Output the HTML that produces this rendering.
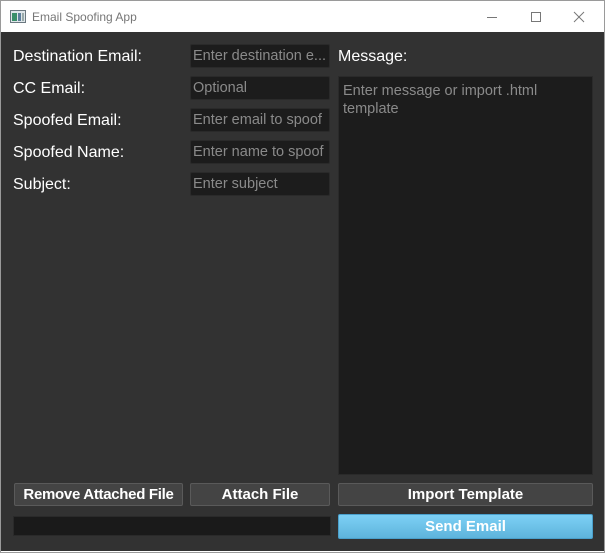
<!DOCTYPE html>
<html><head><style>
*{box-sizing:border-box;margin:0;padding:0}
body{width:605px;height:553px;background:#fff;font-family:"DejaVu Sans","Liberation Sans",sans-serif;position:relative;overflow:hidden}
.win{position:absolute;left:0;top:0;width:605px;height:553px;border:1px solid #9a9a9a}
.title{position:absolute;left:1px;top:1px;width:603px;height:31px;background:#fff}
.title span{position:absolute;left:31px;top:9px;font-size:12px;color:#777;font-family:"Liberation Sans",sans-serif}
.content{position:absolute;left:1px;top:32px;width:603px;height:519px;background:#323232}
.lbl{position:absolute;left:13px;color:#fff;font-size:16px;font-family:"Liberation Sans",sans-serif}
.in{position:absolute;left:190px;width:140px;height:24px;background:#1c1c1c;border:1px solid #2a2a2a;border-radius:2px;color:#8a8a8a;font-size:14.5px;padding:3px 2px;white-space:nowrap;overflow:hidden;font-family:"Liberation Sans",sans-serif}
.btn{position:absolute;height:23px;background:#444;border:1px solid #5a5a5a;border-radius:2px;color:#fff;font-weight:bold;font-size:15px;text-align:center;line-height:21px;font-family:"Liberation Sans",sans-serif;white-space:nowrap}
</style></head><body>
<div class="win"></div>
<div class="title">
<svg style="position:absolute;left:9px;top:9px" width="16" height="13"><rect x="0.5" y="0.5" width="15" height="12" fill="#dfe6ea" stroke="#6b7880"/><rect x="2" y="3" width="5" height="8" fill="#3a8f6a"/><rect x="8" y="3" width="3" height="8" fill="#5d7f9c"/><rect x="12" y="3" width="2" height="8" fill="#9aa"/></svg>
<span>Email Spoofing App</span>
<svg style="position:absolute;left:484px;top:10px" width="100" height="14"><line x1="2" y1="6.5" x2="12" y2="6.5" stroke="#777"/><rect x="46.5" y="1.5" width="9" height="9" fill="none" stroke="#777"/><line x1="89" y1="1" x2="99" y2="11" stroke="#777"/><line x1="99" y1="1" x2="89" y2="11" stroke="#777"/></svg>
</div>
<div class="content"></div>
<div class="lbl" style="top:48px">Destination Email:</div>
<div class="lbl" style="top:80px">CC Email:</div>
<div class="lbl" style="top:112px">Spoofed Email:</div>
<div class="lbl" style="top:144px">Spoofed Name:</div>
<div class="lbl" style="top:176px">Subject:</div>
<div class="lbl" style="top:48px;left:338px">Message:</div>
<div class="in" style="top:44px">Enter destination e...</div>
<div class="in" style="top:76px">Optional</div>
<div class="in" style="top:108px">Enter email to spoof</div>
<div class="in" style="top:140px">Enter name to spoof</div>
<div class="in" style="top:172px">Enter subject</div>
<div style="position:absolute;left:338px;top:76px;width:255px;height:399px;background:#1c1c1c;border:1px solid #2a2a2a;color:#8a8a8a;font-size:14.5px;padding:5px 4px;line-height:18px;font-family:'Liberation Sans',sans-serif">Enter message or import .html template</div>
<div class="btn" style="left:14px;top:483px;width:169px;letter-spacing:-0.3px">Remove Attached File</div>
<div class="btn" style="left:190px;top:483px;width:140px">Attach File</div>
<div class="btn" style="left:338px;top:483px;width:255px">Import Template</div>
<div style="position:absolute;left:13px;top:516px;width:318px;height:20px;background:#1a1a1a;border:1px solid #2a2a2a"></div>
<div class="btn" style="left:338px;top:514px;width:255px;height:25px;line-height:23px;background:linear-gradient(#7dd0f5,#5eb4dc);border-color:#4aa0cc">Send Email</div>
</body></html>
